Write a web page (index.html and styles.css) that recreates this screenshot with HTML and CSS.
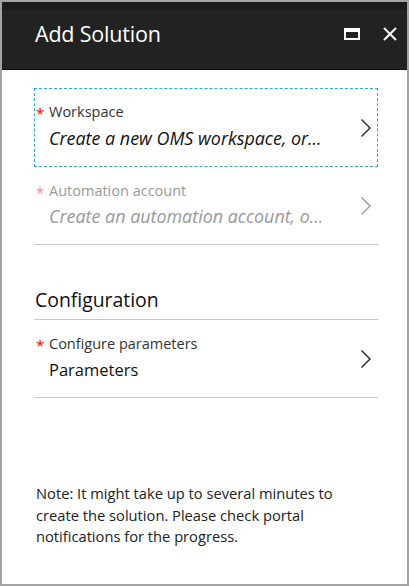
FILE: index.html
```html
<!DOCTYPE html>
<html>
<head>
<meta charset="utf-8">
<link rel="stylesheet" href="styles.css">
</head>
<body>
<div class="blade">
  <header class="blade-header">
    <h1 class="title">Add Solution</h1>
    <div class="actions">
      <svg class="icon-max" width="16" height="12" viewBox="0 0 16 12"><rect x="1" y="1" width="14" height="10" fill="none" stroke="#fff" stroke-width="2"/><rect x="1" y="1" width="14" height="3" fill="#fff"/></svg>
      <svg class="icon-close" width="14" height="14" viewBox="0 0 14 14"><path d="M1 1L13 13M13 1L1 13" stroke="#fff" stroke-width="2"/></svg>
    </div>
  </header>
  <main class="content">
    <div class="field field-focus">
      <div class="field-text">
        <div class="label"><span class="req">*</span>Workspace</div>
        <div class="value italic">Create a new OMS workspace, or...</div>
      </div>
      <svg class="chev" width="12" height="20" viewBox="0 0 12 20"><path d="M1.5 1.5L10 10L1.5 18.5" fill="none" stroke="#222" stroke-width="1.4"/></svg>
    </div>
    <div class="field field-disabled field-sep">
      <div class="field-text">
        <div class="label"><span class="req">*</span>Automation account</div>
        <div class="value italic">Create an automation account, o...</div>
      </div>
      <svg class="chev" width="12" height="20" viewBox="0 0 12 20"><path d="M1.5 1.5L10 10L1.5 18.5" fill="none" stroke="#999" stroke-width="1.4"/></svg>
    </div>
    <h2 class="section">Configuration</h2>
    <div class="field field-sep field-config">
      <div class="field-text">
        <div class="label"><span class="req">*</span>Configure parameters</div>
        <div class="value">Parameters</div>
      </div>
      <svg class="chev" width="12" height="20" viewBox="0 0 12 20"><path d="M1.5 1.5L10 10L1.5 18.5" fill="none" stroke="#222" stroke-width="1.4"/></svg>
    </div>
    <p class="note">Note: It might take up to several minutes to create the solution. Please check portal notifications for the progress.</p>
  </main>
</div>
</body>
</html>
```
FILE: styles.css
```css
* { box-sizing: border-box; }
html, body { margin: 0; padding: 0; }
body {
  width: 409px;
  height: 586px;
  background: #fff;
  font-family: "Open Sans", "Noto Sans", sans-serif;
  color: #222;
}
.blade {
  width: 409px;
  height: 586px;
  border: 2px solid #a3a3a3;
  display: flex;
  flex-direction: column;
}
.blade-header {
  height: 68px;
  background: #222222;
  border-top: 8px solid #1c1c1c;
  border-bottom: 1px solid #111;
  display: flex;
  align-items: flex-start;
  padding: 9px 10px 0 33px;
}
.title {
  margin: 0;
  font-weight: 400;
  font-size: 21.5px;
  line-height: 30px;
  color: #fff;
  flex: 1;
  letter-spacing: -0.2px;
}
.actions {
  display: flex;
  align-items: center;
  gap: 23px;
  padding-top: 8px;
}
.content {
  padding: 18px 29px 0 32px;
  flex: 1;
}
.field {
  display: flex;
  align-items: center;
  padding: 0 6px 0 2px;
}
.field-focus {
  border: 1px dashed #2aa8e0;
  height: 79px;
  padding: 0 5px 0 1px;
}
.field-text { flex: 1; min-width: 0; }
.label {
  font-size: 14.5px;
  line-height: 18px;
  position: relative;
  padding-left: 13px;
  color: #333;
}
.req {
  position: absolute;
  left: 0;
  top: 1px;
  color: #e00;
  font-size: 15px;
}
.value {
  font-size: 16.5px;
  line-height: 24px;
  padding-left: 13px;
  margin-top: 4px;
  white-space: nowrap;
  color: #111;
}
.italic { font-style: italic; font-size: 17.9px; letter-spacing: 0; }
.field-focus .label { margin-top: -3px; }
.field-focus .value { margin-top: 5px; }
.field-disabled .label { margin-top: -2px; }
.field-disabled .label, .field-disabled .value { color: #999; }
.field-disabled .req { color: #f48a95; }
.field-sep {
  border-bottom: 1px solid #c8c8c8;
  height: 78px;
}
.section {
  margin: 41px 0 0 0;
  font-size: 19.4px;
  font-weight: 400;
  height: 34px;
  padding-left: 1px;
  border-bottom: 1px solid #c8c8c8;
  color: #111;
}
.field-config { height: 78px; }
.field-config .value { margin-top: 5px; }
.note {
  margin: 85px 0 0 2px;
  font-size: 14.7px;
  line-height: 21.5px;
  color: #222;
  width: 320px;
}
```
